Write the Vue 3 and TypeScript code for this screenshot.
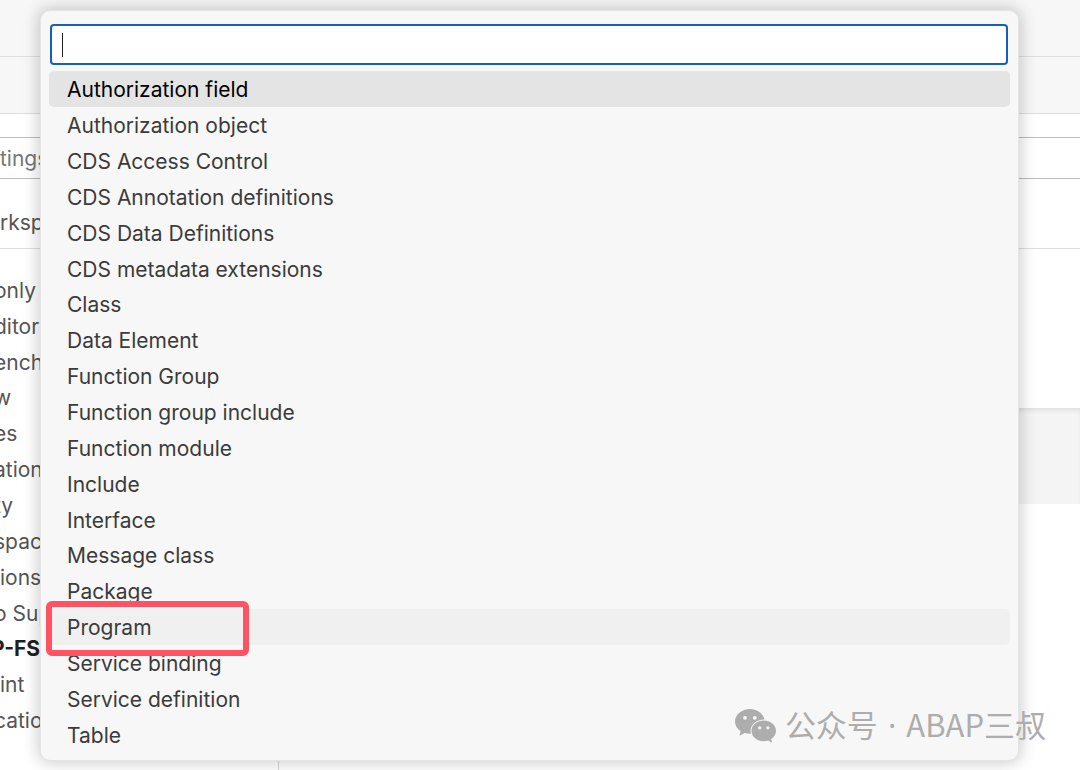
<script setup lang="ts">
import { ref } from 'vue'

interface ObjectType {
  label: string
  state?: 'focused' | 'hovered'
}

interface Section {
  label: string
  kind?: 'inset' | 'active'
}

const query = ref('')

const objectTypes: ObjectType[] = [
  { label: 'Authorization field', state: 'focused' },
  { label: 'Authorization object' },
  { label: 'CDS Access Control' },
  { label: 'CDS Annotation definitions' },
  { label: 'CDS Data Definitions' },
  { label: 'CDS metadata extensions' },
  { label: 'Class' },
  { label: 'Data Element' },
  { label: 'Function Group' },
  { label: 'Function group include' },
  { label: 'Function module' },
  { label: 'Include' },
  { label: 'Interface' },
  { label: 'Message class' },
  { label: 'Package' },
  { label: 'Program', state: 'hovered' },
  { label: 'Service binding' },
  { label: 'Service definition' },
  { label: 'Table' },
]

const sections: Section[] = [
  { label: 'only' },
  { label: 'ditor' },
  { label: 'ench' },
  { label: 'w' },
  { label: 'es' },
  { label: 'ation' },
  { label: 'ty' },
  { label: 'spac' },
  { label: 'ions', kind: 'inset' },
  { label: 'o Sup' },
  { label: 'P-FS', kind: 'active' },
  { label: 'int', kind: 'inset' },
  { label: 'catio' },
]
</script>

<template>
  <div class="window">
    <div class="editor">
      <div class="band"></div>
      <div class="band"></div>
      <div class="search-row">
        <div class="search-box">tings</div>
      </div>
      <div class="scope-row">rksp</div>
      <div class="body">
        <nav class="sidebar" aria-label="Sections">
          <div
            v-for="section in sections"
            :key="section.label"
            class="section"
            :class="section.kind"
          >{{ section.label }}</div>
        </nav>
        <div class="content">
          <div class="setting"></div>
        </div>
      </div>
    </div>

    <div class="picker" role="dialog" aria-label="Object type">
      <div class="field">
        <input v-model="query" class="query" type="text" aria-label="Filter object types" />
        <span class="caret"></span>
      </div>
      <ul class="list">
        <li v-for="item in objectTypes" :key="item.label" class="row">
          <button type="button" class="option" :class="item.state">{{ item.label }}</button>
          <span v-if="item.state === 'hovered'" class="marker"></span>
        </li>
      </ul>
    </div>

    <div class="watermark">
      <svg class="wechat" viewBox="0 0 42 34" aria-hidden="true">
        <path
          fill="#adadad"
          d="M15 0C6.7 0 0 5.6 0 12.6c0 4 2.2 7.400 5.700 9.700L4.300 26.800l5.400-2.800c1.700.5 3.500.8 5.300.8h1c-.3-1-.5-2-.5-3 0-6.300 6-11.300 13.400-11.300h.6C28 4.400 22 0 15 0z"
        />
        <path
          fill="#adadad"
          d="M28.800 11.600c-6.800 0-12.300 4.600-12.300 10.300s5.500 10.300 12.300 10.300c1.600 0 3.100-.2 4.400-.7l4 2.200-1.100-3.700c3-1.900 4.900-4.800 4.900-8.100 0-5.700-5.400-10.300-12.200-10.300z"
        />
        <circle cx="10" cy="8.800" r="1.900" fill="#f7f7f7" />
        <circle cx="19.800" cy="8.800" r="1.900" fill="#f7f7f7" />
        <circle cx="24.700" cy="18.800" r="1.600" fill="#f7f7f7" />
        <circle cx="32.900" cy="18.800" r="1.600" fill="#f7f7f7" />
      </svg>
      <span>公众号<span class="dot"> · </span>ABAP三叔</span>
    </div>
  </div>
</template>

<style>
body {
  margin: 0;
}
</style>

<style scoped>
.window {
  position: relative;
  height: 100vh;
  overflow: hidden;
  background: #ffffff;
  color: #3b3b3b;
  font-family: Inter, "Liberation Sans", sans-serif;
  font-size: 21px;
}

.window *,
.window {
  box-sizing: border-box;
}

.editor {
  display: flex;
  flex-direction: column;
  height: 100%;
  color: #555555;
}

.band {
  flex: none;
  height: 57px;
  background: #f7f7f7;
  border-bottom: 1px solid #dedede;
}

.search-row {
  flex: none;
  padding-top: 23px;
}

.search-box {
  display: flex;
  align-items: center;
  height: 42px;
  border-top: 1px solid #bcbcbc;
  border-bottom: 1px solid #bcbcbc;
  color: #767676;
}

.scope-row {
  display: flex;
  flex: none;
  align-items: center;
  height: 70px;
  padding-top: 18px;
  border-bottom: 1px solid #dedede;
}

.body {
  display: flex;
  flex: 1;
  min-height: 0;
}

.sidebar {
  display: flex;
  flex: none;
  flex-direction: column;
  width: 279px;
  padding: 24px 0 31px;
  border-right: 1px solid #d4d4d4;
}

.section {
  display: flex;
  flex: 1;
  align-items: center;
  margin-left: -6px;
  line-height: 24px;
  white-space: nowrap;
}

.section.inset {
  margin-left: 0;
}

.section.active {
  margin-left: -9px;
  color: #1f1f1f;
  font-weight: 700;
}

.content {
  flex: 1;
  padding-top: 159px;
}

.setting {
  height: 96px;
  background: #f4f4f4;
  box-shadow: inset 0 4px 4px -2px #dcdcdc;
}

.picker {
  position: absolute;
  top: 11px;
  right: 62px;
  bottom: 10px;
  left: 41px;
  display: flex;
  flex-direction: column;
  padding: 13px 8px 8px;
  border-radius: 9px;
  background: #f7f7f7;
  box-shadow: 0 0 0 1px #e4e4e4, 0 0 16px 3px rgba(0, 0, 0, 0.2);
}

.field {
  position: relative;
  flex: none;
  margin: 0 2px 6px 1px;
}

.query {
  display: block;
  width: 100%;
  height: 41px;
  padding: 0 10px;
  border: 2px solid #1460b8;
  border-radius: 4px;
  outline: none;
  background: #ffffff;
  color: #3b3b3b;
  font: inherit;
}

.caret {
  position: absolute;
  top: 9px;
  left: 12px;
  width: 1px;
  height: 24px;
  background: #202020;
}

.list {
  display: flex;
  flex: 1;
  flex-direction: column;
  min-height: 0;
  margin: 0;
  padding: 0;
  list-style: none;
}

.row {
  position: relative;
  display: flex;
  flex: 1;
}

.option {
  flex: 1;
  padding: 3px 18px 0;
  border: 0;
  border-radius: 5px;
  background: transparent;
  color: #3b3b3b;
  font: inherit;
  line-height: 24px;
  text-align: left;
}

.option.focused {
  background: #e4e4e4;
  color: #000000;
}

.option.hovered {
  background: #f0f0f0;
}

.marker {
  position: absolute;
  z-index: 1;
  top: -8px;
  bottom: -11px;
  left: -3px;
  width: 203px;
  border: 6px solid #ff5263;
  border-radius: 6px;
  pointer-events: none;
}

.watermark {
  position: absolute;
  right: 34px;
  bottom: 23px;
  display: flex;
  align-items: center;
  gap: 8px;
  color: #adadad;
  font-family: "Noto Sans CJK SC", sans-serif;
  font-size: 31px;
  line-height: 44px;
  white-space: nowrap;
}

.dot {
  padding: 0 2px;
  font-family: "Noto Sans", sans-serif;
}

.wechat {
  width: 42px;
  height: 34px;
  margin-top: 2px;
}
</style>
